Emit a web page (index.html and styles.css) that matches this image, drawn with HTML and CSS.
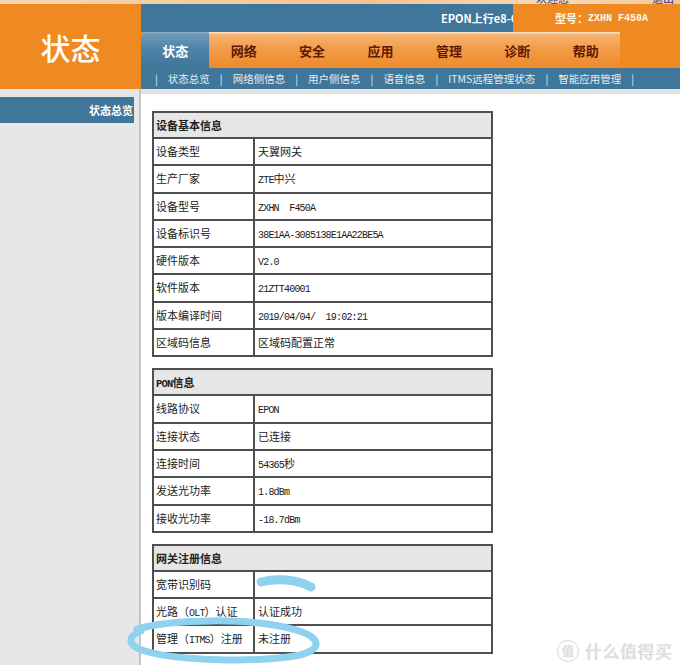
FILE: index.html
```html
<!DOCTYPE html>
<html lang="zh-CN">
<head>
<meta charset="utf-8">
<title>状态</title>
<link rel="stylesheet" href="styles.css">
</head>
<body>
<div class="page">
  <div class="topstrip">
    <span class="welcome">欢迎您•</span>
    <span class="logout">退出</span>
  </div>
  <div class="header">
    <div class="brand">状态</div>
    <div class="headmain">
      <div class="titlebar">
        <div class="product"><span>EPON上行e8-C</span></div>
        <div class="model">型号：<span class="model-code">ZXHN F450A</span></div>
      </div>
      <div class="tabrow">
        <ul class="tabs">
          <li class="tab active">状态</li>
          <li class="tab">网络</li>
          <li class="tab">安全</li>
          <li class="tab">应用</li>
          <li class="tab">管理</li>
          <li class="tab">诊断</li>
          <li class="tab">帮助</li>
        </ul>
      </div>
      <div class="subnav">
        <span class="sep">|</span><span class="sub">状态总览</span>
        <span class="sep">|</span><span class="sub">网络侧信息</span>
        <span class="sep">|</span><span class="sub">用户侧信息</span>
        <span class="sep">|</span><span class="sub">语音信息</span>
        <span class="sep">|</span><span class="sub">ITMS远程管理状态</span>
        <span class="sep">|</span><span class="sub">智能应用管理</span>
        <span class="sep">|</span>
      </div>
    </div>
  </div>
  <div class="body">
    <div class="sidebar">
      <div class="side-item">状态总览</div>
    </div>
    <div class="content">
      <div class="info">
        <div class="info-head">设备基本信息</div>
        <div class="info-row"><div class="label">设备类型</div><div class="value">天翼网关</div></div>
        <div class="info-row"><div class="label">生产厂家</div><div class="value"><span class="mono">ZTE</span>中兴</div></div>
        <div class="info-row"><div class="label">设备型号</div><div class="value"><span class="mono">ZXHN  F450A</span></div></div>
        <div class="info-row"><div class="label">设备标识号</div><div class="value"><span class="mono">38E1AA-3085138E1AA22BE5A</span></div></div>
        <div class="info-row"><div class="label">硬件版本</div><div class="value"><span class="mono">V2.0</span></div></div>
        <div class="info-row"><div class="label">软件版本</div><div class="value"><span class="mono">21ZTT40001</span></div></div>
        <div class="info-row"><div class="label">版本编译时间</div><div class="value"><span class="mono">2019/04/04/  19:02:21</span></div></div>
        <div class="info-row"><div class="label">区域码信息</div><div class="value">区域码配置正常</div></div>
      </div>
      <div class="info">
        <div class="info-head"><span class="mono-b">PON</span>信息</div>
        <div class="info-row"><div class="label">线路协议</div><div class="value"><span class="mono">EPON</span></div></div>
        <div class="info-row"><div class="label">连接状态</div><div class="value">已连接</div></div>
        <div class="info-row"><div class="label">连接时间</div><div class="value"><span class="mono">54365</span>秒</div></div>
        <div class="info-row"><div class="label">发送光功率</div><div class="value"><span class="mono">1.8dBm</span></div></div>
        <div class="info-row"><div class="label">接收光功率</div><div class="value"><span class="mono">-18.7dBm</span></div></div>
      </div>
      <div class="info">
        <div class="info-head">网关注册信息</div>
        <div class="info-row"><div class="label">宽带识别码</div><div class="value"></div></div>
        <div class="info-row"><div class="label">光路（<span class="mono">OLT</span>）认证</div><div class="value">认证成功</div></div>
        <div class="info-row"><div class="label">管理（<span class="mono">ITMS</span>）注册</div><div class="value">未注册</div></div>
      </div>
    </div>
  </div>

  <svg class="marks" width="680" height="665" viewBox="0 0 680 665" aria-hidden="true">
    <path class="blob" d="M261 582 C277 578 296 579 311 587" />
    <path class="loop" d="M137 629 C172 619 252 617 296 630 C321 637 323 649 300 655 C258 663 178 661 145 651 C127 646 127 636 141 631" />
  </svg>

  <div class="watermark">
    <span class="wm-logo">值</span>
    <span class="wm-text">什么值得买</span>
  </div>
</div>
</body>
</html>
```

FILE: styles.css
```css
html, body {
  margin: 0;
  padding: 0;
  overflow: hidden;
}

body {
  background: #ffffff;
  font-family: "Noto Sans CJK SC", "Liberation Sans", sans-serif;
  color: #222222;
}

.page {
  position: relative;
  width: 680px;
  height: 665px;
  overflow: hidden;
}

/* top strip (clipped welcome line) */
.topstrip {
  height: 4px;
  overflow: hidden;
  display: flex;
  justify-content: flex-end;
  gap: 72px;
  padding-right: 6px;
  background: linear-gradient(90deg, #f6d6b2 0%, #f4c48f 55%, #f7d9b8 80%, #f3c898 100%);
  font-size: 11px;
  line-height: 12px;
  color: #1f3f9c;
}

.topstrip span {
  margin-top: -8px;
}

/* header */
.header {
  display: flex;
  height: 85px;
}

.brand {
  width: 141px;
  background: #ef8a22;
  color: #ffffff;
  font-size: 30px;
  font-weight: 500;
  display: flex;
  align-items: center;
  justify-content: center;
}

.headmain {
  flex: 1;
  display: flex;
  flex-direction: column;
}

.titlebar {
  height: 28px;
  display: flex;
}

.product {
  width: 372px;
  background: #40769a;
  display: flex;
  justify-content: flex-end;
  align-items: center;
  overflow: hidden;
}

.product span {
  color: #ffffff;
  font-weight: bold;
  font-size: 11px;
  margin-right: -5px;
  white-space: nowrap;
}

.model {
  flex: 1;
  background: #ef8a22;
  color: #fff6e6;
  font-weight: bold;
  font-size: 11px;
  display: flex;
  align-items: center;
  padding-left: 42px;
}

.model-code {
  font-family: "Liberation Mono", monospace;
  font-size: 10px;
  font-weight: bold;
}

.tabrow {
  height: 36px;
  background: #ef8a22;
  display: flex;
}

.tabs {
  list-style: none;
  margin: 0;
  padding: 0;
  width: 479px;
  display: flex;
}

.tab {
  flex: 1;
  display: flex;
  align-items: center;
  justify-content: center;
  font-size: 13px;
  font-weight: bold;
  color: #5e1a04;
  background: linear-gradient(#fde2c4 0, #fde2c4 1px, #f7b574 2px, #f29d4a 45%, #ee8a2a 100%);
}

.tab.active {
  background: linear-gradient(#8fb3cc 0, #6f9bba 2px, #4f83a6 45%, #40769a 100%);
  color: #ffffff;
  border-top-left-radius: 5px;
}

.subnav {
  height: 21px;
  background: #40769a;
  display: flex;
  align-items: center;
  gap: 10px;
  padding-left: 14px;
  font-size: 10.5px;
  color: #e3ecf3;
  white-space: nowrap;
}

/* body */
.body {
  display: flex;
  height: 576px;
}

.sidebar {
  width: 139px;
  background: #e7e7e7;
  border-right: 2px solid #c4c4c4;
  padding-top: 8px;
}

.side-item {
  width: 134px;
  height: 26px;
  box-sizing: border-box;
  background: #40769a;
  color: #ffffff;
  font-weight: bold;
  font-size: 11px;
  display: flex;
  align-items: center;
  justify-content: flex-end;
  padding-right: 1px;
}

.content {
  flex: 1;
  border-top: 5px solid #e2e2e2;
  padding: 17px 0 0 11px;
}

.info {
  width: 341px;
  box-sizing: border-box;
  border: 2px solid #4f4f4f;
}

.info + .info {
  margin-top: 11px;
}

.info-head {
  height: 24px;
  line-height: 24px;
  background: #e6e6e6;
  padding-left: 2px;
  font-weight: bold;
  font-size: 11px;
  color: #222222;
}

.info-row {
  display: grid;
  grid-template-columns: 101px 1fr;
  height: 27.3px;
  box-sizing: border-box;
  border-top: 2px solid #4f4f4f;
}

.info-row > div {
  line-height: 25.3px;
  font-size: 11px;
  color: #222222;
  white-space: nowrap;
  overflow: hidden;
}

.label {
  padding-left: 2px;
  border-right: 2px solid #4f4f4f;
}

.value {
  padding-left: 3px;
}

.mono {
  font-family: "Liberation Mono", monospace;
  font-size: 10px;
  letter-spacing: -0.8px;
  white-space: pre;
  color: #1a1a1a;
}

.mono-b {
  font-family: "Liberation Mono", monospace;
  font-size: 10.5px;
  font-weight: bold;
  letter-spacing: -0.8px;
}

/* marker annotations drawn over the screenshot */
.marks {
  position: absolute;
  left: 0;
  top: 0;
  pointer-events: none;
}

.marks path {
  fill: none;
  stroke: #8ed2f0;
  stroke-linecap: round;
  stroke-linejoin: round;
}

.marks .blob {
  stroke-width: 9;
}

.marks .loop {
  stroke-width: 7;
}

/* watermark */
.watermark {
  position: absolute;
  left: 557px;
  top: 638px;
  display: flex;
  align-items: center;
  gap: 6px;
  color: #e2e2e2;
  text-shadow: 0 0 1px #b8b8b8;
}

.wm-logo {
  width: 20px;
  height: 20px;
  border: 1.5px solid #d8d8d8;
  border-radius: 50%;
  font-size: 12px;
  display: flex;
  align-items: center;
  justify-content: center;
}

.wm-text {
  font-size: 17px;
  letter-spacing: 0.5px;
}
```
